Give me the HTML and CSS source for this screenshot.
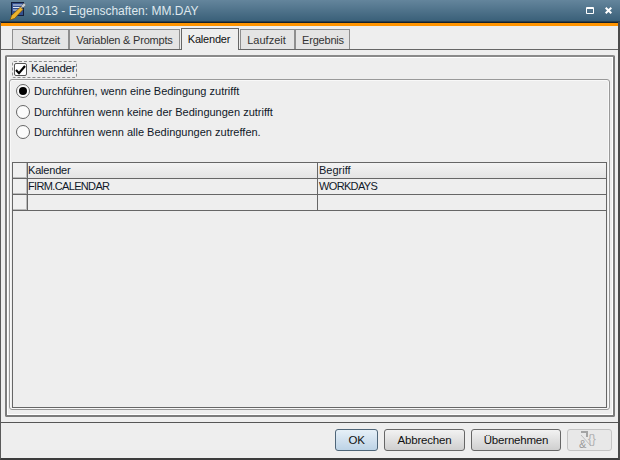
FILE: index.html
```html
<!DOCTYPE html>
<html lang="de">
<head>
<meta charset="utf-8">
<title>J013 - Eigenschaften: MM.DAY</title>
<link rel="stylesheet" href="styles.css">
</head>
<body>
<div class="window">
  <header class="titlebar">
    <svg class="app-icon" width="18" height="20" viewBox="0 0 18 20">
      <rect x="2.5" y="1.5" width="12" height="13" fill="#33508f" stroke="#141e3c"/>
      <path d="M4 4h9M4 6.5h9M4 9h6" stroke="#dfe6f4" stroke-width="1.2"/>
      <path d="M1 19l1.5-4.5 9-8.5 2.5 2.5-8.5 9z" fill="#eeb32c" stroke="#6d4c0e" stroke-width=".7"/>
      <path d="M12 5l3-3 2 2-3 3z" fill="#c4c9cf" stroke="#555" stroke-width=".4"/>
    </svg>
    <span class="title">J013 - Eigenschaften: MM.DAY</span>
    <svg class="win-btn max" width="8" height="7" viewBox="0 0 8 7"><path d="M.5.5h7v6h-7z" fill="none" stroke="#fff"/><path d="M0 1.5h8" stroke="#fff" stroke-width="1"/></svg>
    <svg class="win-btn" width="7" height="7" viewBox="0 0 7 7"><path d="M.7.7l5.6 5.6M6.3.7L.7 6.3" stroke="#fff" stroke-width="2"/></svg>
  </header>
  <div class="accent"></div>
  <main class="content">
    <nav class="tabs">
      <div class="tab w-start">Startzeit</div>
      <div class="tab w-var">Variablen &amp; Prompts</div>
      <div class="tab active w-kal">Kalender</div>
      <div class="tab w-lauf">Laufzeit</div>
      <div class="tab w-erg">Ergebnis</div>
    </nav>
    <section class="tabpanel">
      <div class="outer">
        <label class="check-row">
          <span class="checkbox"><svg width="11" height="10" viewBox="0 0 11 10"><path d="M1 5l3 3.2L10 1" fill="none" stroke="#000" stroke-width="2.2"/></svg></span>
          <span class="check-label">Kalender</span>
        </label>
        <div class="group">
          <div class="radio-row"><span class="radio on"></span><span>Durchführen, wenn eine Bedingung zutrifft</span></div>
          <div class="radio-row"><span class="radio"></span><span>Durchführen wenn keine der Bedingungen zutrifft</span></div>
          <div class="radio-row"><span class="radio"></span><span>Durchführen wenn alle Bedingungen zutreffen.</span></div>
          <div class="grid">
            <div class="tr head"><div class="rh"></div><div class="c1 narrow">Kalender</div><div class="c2">Begriff</div></div>
            <div class="tr"><div class="rh"></div><div class="c1 caps">FIRM.CALENDAR</div><div class="c2 caps">WORKDAYS</div></div>
            <div class="tr"><div class="rh"></div><div class="c1"></div><div class="c2"></div></div>
          </div>
        </div>
      </div>
    </section>
    <footer class="actions">
      <button class="btn ok">OK</button>
      <button class="btn cancel">Abbrechen</button>
      <button class="btn apply">Übernehmen</button>
      <button class="btn vars" disabled aria-label="Variablen"><svg width="24" height="18" viewBox="0 0 24 18"><path d="M3 1h6v5" fill="none" stroke="#a4a4a4" stroke-width="2"/><path d="M3 4l10 11" stroke="#bdbdbd"/><text x="1" y="17" class="amp">&amp;</text><text x="10" y="12" class="brace">{}</text></svg></button>
    </footer>
  </main>
</div>
</body>
</html>
```
FILE: styles.css
```css
* { box-sizing: border-box; }
html, body { margin: 0; padding: 0; }
body { width: 620px; height: 460px; font: 11px "Liberation Sans", Tahoma, sans-serif; color: #101828; }
.window { width: 620px; height: 460px; display: flex; flex-direction: column; background: #eeeeee; border-right: 2px solid #4a4a4a; border-left: 1px solid #5a5a5a; border-bottom: 2px solid #3c3c3c; }
.titlebar { height: 22px; flex: none; margin: 0 -2px 0 -1px; padding: 0 8px 0 9px; display: flex; align-items: center; background: linear-gradient(#64859c, #3a6079); border-bottom: 1px solid #2a4152; }
.app-icon { flex: none; }
.title { margin-left: 5px; flex: 1; color: #dfe8ee; font: 12px "Liberation Sans", sans-serif; }
.win-btn { display: block; }
.max { margin-right: 11px; }
.accent { height: 4px; flex: none; background: #ff9400; border-top: 1px solid #16222c; }
.content { flex: 1; display: flex; flex-direction: column; min-height: 0; }
.tabs { height: 24px; flex: none; padding: 3px 0 0 11px; display: flex; align-items: flex-end; border-bottom: 1px solid #666; }
.tab { height: 20px; text-align: center; line-height: 21px; background: #e4e4e4; border: 1px solid #8e8e8e; border-bottom: 0; color: #333; white-space: nowrap; letter-spacing: -0.2px; }
.tab.active { height: 22px; margin-bottom: -1px; background: #eeeeee; border-color: #666; color: #111; line-height: 20px; }
.w-start { width: 57px; }
.w-var { width: 111px; }
.w-kal { width: 58px; margin-left: 1px; padding-right: 2px; }
.w-lauf { width: 55px; margin-left: 1px; padding-right: 2px; letter-spacing: 0; }
.w-erg { width: 55px; padding-left: 1px; }
.tabpanel { flex: 1; padding: 5px 3px 5px 4px; min-height: 0; display: flex; }
.outer { flex: 1; padding: 4px 3px 5px 2px; border: 2px solid #7c7c7c; border-top-color: #8a8a8a; border-radius: 2px; display: flex; flex-direction: column; box-shadow: inset 0 0 0 1px #fff; }
.check-row { align-self: flex-start; height: 17px; margin: 0 0 1px 3px; padding: 0 1px; display: flex; align-items: center; gap: 4px; border: 1px dashed #8c8c8c; border-radius: 2px; color: #101828; font-size: 11.5px; letter-spacing: -0.2px; }
.check-label { line-height: 13px; margin-bottom: 2px; }
.checkbox { width: 13px; height: 13px; display: flex; align-items: center; justify-content: center; background: #fff; border: 1px solid #555; border-radius: 2px; }
.group { flex: 1; border: 1px solid #999; border-radius: 3px; padding: 1px 2px 1px 2px; display: flex; flex-direction: column; box-shadow: inset 0 0 0 1px #f8f8f8; }
.radio-row { height: 20.5px; padding-left: 4px; display: flex; align-items: center; gap: 4px; flex: none; }
.radio { flex: none; width: 14px; height: 14px; border: 1px solid #666; border-radius: 50%; background: #fbfbfb; display: flex; align-items: center; justify-content: center; }
.radio.on::after { content: ""; width: 8px; height: 8px; border-radius: 50%; background: #000; }
.grid { flex: 1; margin-top: 19.5px; border: 1px solid #666; display: flex; flex-direction: column; }
.tr { height: 16px; display: flex; border-bottom: 1px solid #666; flex: none; line-height: 15px; white-space: nowrap; }
.rh { width: 15px; flex: none; background: #f0f0f0; border-right: 1px solid #666; box-shadow: inset -1px -1px 0 #bbb; }
.head { background: linear-gradient(#f3f3f3, #e4e4e4); }
.c1 { width: 290px; flex: none; border-right: 1px solid #666; }
.c2 { flex: 1; padding-left: 1px; }
.narrow { letter-spacing: -0.2px; }
.caps { letter-spacing: -0.65px; }
.actions { height: 36px; flex: none; border-top: 1px solid #555; padding: 6px 6px 0 0; display: flex; justify-content: flex-end; gap: 6px; }
.btn { height: 22px; padding: 0; font: 11.5px "Liberation Sans", Tahoma, sans-serif; letter-spacing: -0.2px; color: #111; border: 1px solid #666; border-radius: 3px; background: linear-gradient(#f2f2f2, #cfcfcf); }
.ok { width: 43px; background: linear-gradient(#e6f0f8, #bdd3e6); border-color: #4e6578; }
.cancel { width: 81px; }
.apply { width: 90px; }
.vars { width: 45px; border-color: #c4c4c4; background: #e8e8e8; display: flex; align-items: center; justify-content: center; }
.amp { font: 11px "Liberation Sans", sans-serif; fill: #9a9a9a; }
.brace { font: 12px "Liberation Sans", sans-serif; fill: #b0b0b0; }
```
